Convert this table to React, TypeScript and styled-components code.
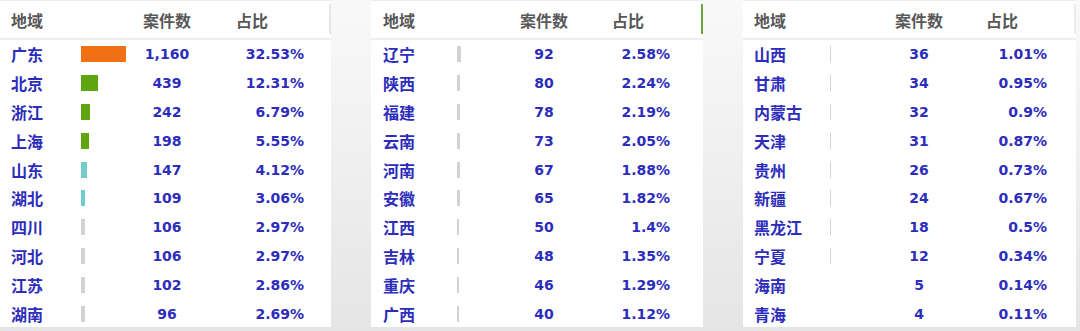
import styled, { createGlobalStyle } from 'styled-components'

interface Row {
  name: string
  count: number
  pct: string
}

interface Layout {
  cols: string
  pad: number
  pctIndent: number
  width: number
  mark: string
}

const GlobalStyle = createGlobalStyle`
  html, body {
    margin: 0;
    padding: 0;
  }
  body {
    background: linear-gradient(#f9f9f9, #e5e5e5);
    height: 331px;
    overflow: hidden;
  }
`

const panels: { layout: Layout, rows: Row[] }[] = [
  {
    layout: { cols: '70px 46px 80px 97px', pad: 11, pctIndent: 29, width: 331, mark: '#e6e6e6' },
    rows: [
      { name: '广东', count: 1160, pct: '32.53%' },
      { name: '北京', count: 439, pct: '12.31%' },
      { name: '浙江', count: 242, pct: '6.79%' },
      { name: '上海', count: 198, pct: '5.55%' },
      { name: '山东', count: 147, pct: '4.12%' },
      { name: '湖北', count: 109, pct: '3.06%' },
      { name: '四川', count: 106, pct: '2.97%' },
      { name: '河北', count: 106, pct: '2.97%' },
      { name: '江苏', count: 102, pct: '2.86%' },
      { name: '湖南', count: 96, pct: '2.69%' },
    ]
  },
  {
    layout: { cols: '74px 47px 80px 86px', pad: 12, pctIndent: 28, width: 332, mark: '#6aa83a' },
    rows: [
      { name: '辽宁', count: 92, pct: '2.58%' },
      { name: '陕西', count: 80, pct: '2.24%' },
      { name: '福建', count: 78, pct: '2.19%' },
      { name: '云南', count: 73, pct: '2.05%' },
      { name: '河南', count: 67, pct: '1.88%' },
      { name: '安徽', count: 65, pct: '1.82%' },
      { name: '江西', count: 50, pct: '1.4%' },
      { name: '吉林', count: 48, pct: '1.35%' },
      { name: '重庆', count: 46, pct: '1.29%' },
      { name: '广西', count: 40, pct: '1.12%' },
    ]
  },
  {
    layout: { cols: '76px 49px 80px 88px', pad: 11, pctIndent: 27, width: 333, mark: '#ececec' },
    rows: [
      { name: '山西', count: 36, pct: '1.01%' },
      { name: '甘肃', count: 34, pct: '0.95%' },
      { name: '内蒙古', count: 32, pct: '0.9%' },
      { name: '天津', count: 31, pct: '0.87%' },
      { name: '贵州', count: 26, pct: '0.73%' },
      { name: '新疆', count: 24, pct: '0.67%' },
      { name: '黑龙江', count: 18, pct: '0.5%' },
      { name: '宁夏', count: 12, pct: '0.34%' },
      { name: '海南', count: 5, pct: '0.14%' },
      { name: '青海', count: 4, pct: '0.11%' },
    ]
  }
]

function barColor(count: number) {
  if (count > 1000) return '#f07013'
  if (count >= 150) return '#5fa60e'
  if (count >= 107) return '#70cdcc'
  return '#d2d2d2'
}

function Panel({ layout, rows }: { layout: Layout, rows: Row[] }) {
  return (
    <Card $width={layout.width}>
      <Header $cols={layout.cols} $pad={layout.pad} $mark={layout.mark}>
        <HeadCell>地域</HeadCell>
        <span />
        <HeadCell $center>案件数</HeadCell>
        <HeadCell $indent={layout.pctIndent}>占比</HeadCell>
      </Header>
      {rows.map(row => (
        <DataRow key={row.name} $cols={layout.cols} $pad={layout.pad}>
          <Name>{row.name}</Name>
          <BarCell>
            {row.count > 8 &&
              <Bar $color={barColor(row.count)} style={{ width: row.count * 45 / 1160 }} />}
          </BarCell>
          <Num $align="center">{row.count.toLocaleString('en-US')}</Num>
          <Num $align="right">{row.pct}</Num>
        </DataRow>
      ))}
    </Card>
  )
}

export default function App() {
  return (
    <Page>
      <GlobalStyle />
      {panels.map((p, i) => (
        <Panel key={i} layout={p.layout} rows={p.rows} />
      ))}
    </Page>
  )
}

const Page = styled.div`
  display: flex;
  gap: 40px;
  width: 1080px;
  height: 331px;
`

const Card = styled.div<{ $width: number }>`
  box-sizing: border-box;
  width: ${p => p.$width}px;
  height: 327px;
  background: #fff;
  border-top: 1px solid #ececec;
  overflow: hidden;
`

const Header = styled.div<{ $cols: string, $pad: number, $mark: string }>`
  display: grid;
  grid-template-columns: ${p => p.$cols} 1fr;
  align-items: center;
  height: 37px;
  padding-left: ${p => p.$pad}px;
  border-bottom: 2px solid #efefef;
  position: relative;
  &::after {
    content: '';
    position: absolute;
    right: 0;
    top: 3px;
    bottom: 4px;
    width: 2px;
    background: ${p => p.$mark};
  }
`

const HeadCell = styled.span<{ $center?: boolean, $indent?: number }>`
  font-family: "Noto Sans CJK SC", sans-serif;
  font-size: 16px;
  font-weight: 700;
  color: #585858;
  text-align: ${p => p.$center ? 'center' : 'left'};
  padding-left: ${p => p.$indent || 0}px;
`

const DataRow = styled.div<{ $cols: string, $pad: number }>`
  display: grid;
  grid-template-columns: ${p => p.$cols} 1fr;
  align-items: center;
  height: 28.8px;
  padding-left: ${p => p.$pad}px;
`

const Name = styled.span`
  font-family: "Noto Sans CJK SC", sans-serif;
  font-size: 16px;
  font-weight: 700;
  color: #2d2dbb;
  white-space: nowrap;
`

const BarCell = styled.div`
  display: flex;
  align-items: center;
  height: 100%;
`

const Bar = styled.div<{ $color: string }>`
  height: 16px;
  min-width: 1px;
  background: ${p => p.$color};
`

const Num = styled.span<{ $align: string }>`
  font-family: "DejaVu Sans", "Noto Sans CJK SC", sans-serif;
  font-size: 14px;
  font-weight: 700;
  color: #2d2dbb;
  text-align: ${p => p.$align};
  white-space: nowrap;
`
